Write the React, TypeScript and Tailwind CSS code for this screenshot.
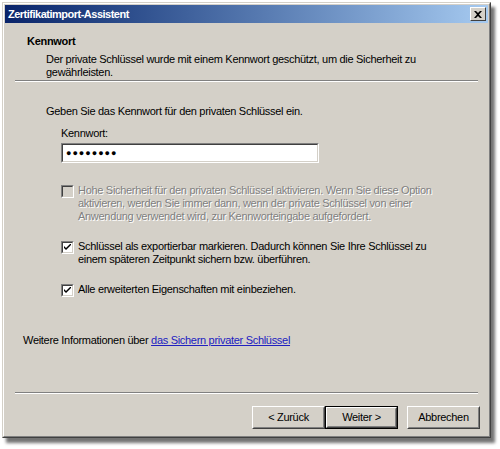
const font = { fontFamily: '"Liberation Sans", Arial, sans-serif' };

const CheckBox = ({ checked, disabled }: { checked?: boolean; disabled?: boolean }) => (
  <div className="w-[13px] h-[13px] shrink-0 border border-t-[#808080] border-l-[#808080] border-r-white border-b-white">
    <div
      className={`w-full h-full border border-t-[#404040] border-l-[#404040] border-r-[#d4d0c8] border-b-[#d4d0c8] flex items-center justify-center ${
        disabled ? "bg-[#d4d0c8]" : "bg-white"
      }`}
    >
      {checked && (
        <svg width="7" height="7" viewBox="0 0 7 7">
          <path d="M0 2 L0 4 L2 6 L7 1 L7 -1 L2 4 Z" fill="#000" />
        </svg>
      )}
    </div>
  </div>
);

const Btn = ({ label, primary }: { label: string; primary?: boolean }) => (
  <div className={`w-[73px] h-[23px] ${primary ? "border border-black" : ""}`}>
    <div className="w-full h-full border border-t-white border-l-white border-r-[#404040] border-b-[#404040] bg-[#d4d0c8]">
      <div className="w-full h-full border border-t-[#d4d0c8] border-l-[#d4d0c8] border-r-[#808080] border-b-[#808080] flex items-center justify-center text-[11px] text-black">
        {label}
      </div>
    </div>
  </div>
);

const Separator = () => (
  <div className="mx-[10px]">
    <div className="h-px bg-[#808080]" />
    <div className="h-px bg-white" />
  </div>
);

export default function App() {
  return (
    <div className="w-[500px] h-[449px] bg-white" style={font}>
      <div className="ml-[2px] pt-[2px]">
        <div className="w-[489px] h-[436px] border border-t-[#d4d0c8] border-l-[#d4d0c8] border-r-[#404040] border-b-[#404040] shadow-[4px_5px_3px_rgba(0,0,0,0.55)]">
          <div className="w-full h-full border border-t-white border-l-white border-r-[#808080] border-b-[#808080] bg-[#d4d0c8] p-px flex flex-col">
            <div className="h-[18px] bg-gradient-to-r from-[#0a246a] to-[#a6caf0] flex items-center justify-between pl-[3px] pr-[2px]">
              <span className="text-[11px] font-bold text-white leading-none tracking-[-0.5px]">Zertifikatimport-Assistent</span>
              <div className="w-[16px] h-[14px] border border-t-white border-l-white border-r-[#404040] border-b-[#404040] bg-[#d4d0c8] flex items-center justify-center">
                <svg width="8" height="7" viewBox="0 0 8 7">
                  <path d="M0 0 L2 0 L4 2 L6 0 L8 0 L5 3.5 L8 7 L6 7 L4 5 L2 7 L0 7 L3 3.5 Z" fill="#000" />
                </svg>
              </div>
            </div>

            <div className="flex-1 flex flex-col text-[11px] leading-[13px] tracking-[-0.3px] text-black">
              <div className="pt-[12px] pl-[22px] font-bold">Kennwort</div>
              <div className="pt-[5px] pl-[41px] pr-[60px]">
                Der private Schlüssel wurde mit einem Kennwort geschützt, um die Sicherheit zu gewährleisten.
              </div>
              <div className="pt-px">
                <Separator />
              </div>

              <div className="pt-[23px] pl-[41px]">Geben Sie das Kennwort für den privaten Schlüssel ein.</div>
              <div className="pt-[9px] pl-[56px]">Kennwort:</div>
              <div className="pt-[3px] pl-[56px]">
                <div className="w-[258px] h-[20px] border border-t-[#808080] border-l-[#808080] border-r-white border-b-white">
                  <div className="w-full h-full border border-t-[#404040] border-l-[#404040] border-r-[#d4d0c8] border-b-[#d4d0c8] bg-white flex items-center pl-[3px] text-[9px] tracking-[1px]">
                    ●●●●●●●●
                  </div>
                </div>
              </div>

              <div className="pt-[21px] pl-[56px] flex gap-[4px]">
                <div className="pt-px">
                  <CheckBox disabled />
                </div>
                <div className="text-[#808080] w-[360px] [text-shadow:1px_1px_0_#fff]">
                  Hohe Sicherheit für den privaten Schlüssel aktivieren. Wenn Sie diese Option aktivieren, werden Sie immer dann, wenn der private Schlüssel von einer Anwendung verwendet wird, zur Kennworteingabe aufgefordert.
                </div>
              </div>

              <div className="pt-[17px] pl-[56px] flex gap-[4px]">
                <div className="pt-px">
                  <CheckBox checked />
                </div>
                <div className="w-[360px]">
                  Schlüssel als exportierbar markieren. Dadurch können Sie Ihre Schlüssel zu einem späteren Zeitpunkt sichern bzw. überführen.
                </div>
              </div>

              <div className="pt-[17px] pl-[56px] flex gap-[4px]">
                <div className="pt-px">
                  <CheckBox checked />
                </div>
                <div>Alle erweiterten Eigenschaften mit einbeziehen.</div>
              </div>

              <div className="pt-[37px] pl-[18px]">
                Weitere Informationen über{" "}
                <span className="text-[#2020c0] underline">das Sichern privater Schlüssel</span>
              </div>

              <div className="pt-[45px]">
                <Separator />
              </div>

              <div className="pt-[12px] pl-[247px] flex">
                <Btn label="< Zurück" />
                <Btn label="Weiter >" primary />
                <div className="w-[9px]" />
                <Btn label="Abbrechen" />
              </div>
            </div>
          </div>
        </div>
      </div>
    </div>
  );
}
